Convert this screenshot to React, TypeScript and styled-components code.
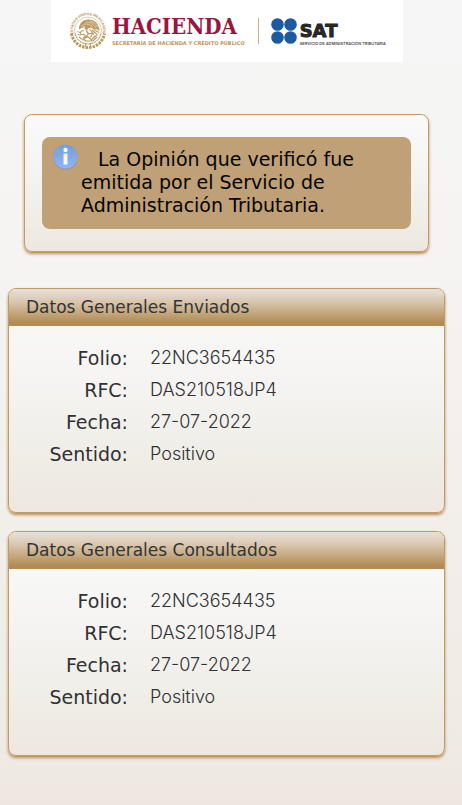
import React from "react";
import styled, { createGlobalStyle } from "styled-components";

const GlobalStyle = createGlobalStyle`
  *, *::before, *::after { box-sizing: border-box; }
  body {
    margin: 0;
    min-height: 100vh;
    background: linear-gradient(#f6f6f6 0%, #f5f4f2 32%, #f3efeb 60%, #efece5 90%, #eee7e0 100%);
    font-family: "DejaVu Sans", sans-serif;
  }
`;

const Page = styled.div`
  display: flex;
  flex-direction: column;
  padding-bottom: 49px;
`;

const Banner = styled.header`
  display: flex;
  align-items: center;
  align-self: center;
  width: calc(100% - 110px);
  max-width: 600px;
  height: 62px;
  padding-left: 18px;
  margin-right: 8px;
  background: #fff;
`;

const Emblem = styled.svg`
  flex: none;
  width: 38px;
  height: 38px;
`;

const Brand = styled.div<{ $gap: number }>`
  display: flex;
  flex-direction: column;
  margin-left: ${(p) => p.$gap}px;
  white-space: nowrap;
`;

const Ministry = styled.span`
  font: bold 22px/22px "DejaVu Serif Condensed", "DejaVu Serif", serif;
  color: #98163f;
`;

const MinistryName = styled.span`
  margin-top: 2px;
  font-size: 5px;
  line-height: 8px;
  font-weight: 700;
  color: #bd9660;
`;

const Divider = styled.span`
  flex: none;
  width: 1px;
  height: 26px;
  margin: 0 12px 0 13px;
  background: #cdae7d;
`;

const Dots = styled.svg`
  flex: none;
  width: 26px;
  height: 26px;
`;

const Agency = styled.span`
  padding-top: 5px;
  font: bold 18px/21px "DejaVu Sans", sans-serif;
  -webkit-text-stroke: 1px #282725;
  color: #282725;
`;

const AgencyName = styled.span`
  font-family: Inter, sans-serif;
  font-size: 4px;
  line-height: 6px;
  font-weight: 600;
  color: #4c4b49;
`;

const Main = styled.main`
  display: flex;
  flex-direction: column;
  gap: 18px;
  padding: 52px 17px 0 8px;
`;

const Card = styled.section`
  overflow: hidden;
  border: 1px solid #c29a68;
  border-radius: 8px;
  background: linear-gradient(#fafafa 0%, #f6f5f4 35%, #efece5 82%, #eee7e0 100%);
  box-shadow: 0 2px 3px #b98e55;
`;

const NoticeCard = styled(Card)`
  margin: 0 16px 18px;
  padding: 22px 17px;
`;

const Notice = styled.div`
  display: flex;
  gap: 3px;
  min-height: 92px;
  padding: 7px 11px 10px;
  border-radius: 8px;
  background: #bfa077;
`;

const InfoIcon = styled.svg`
  flex: none;
  width: 25px;
  height: 26px;
`;

const NoticeText = styled.p`
  margin: 4px 0 0;
  text-indent: 17px;
  font-size: 19px;
  line-height: 23px;
  color: #050403;
`;

const CardTitle = styled.h2`
  margin: 0;
  padding: 0 17px;
  font-size: 17px;
  line-height: 37px;
  font-weight: 400;
  color: #333436;
  background: linear-gradient(#e9e1d7 0%, #d8c6ae 35%, #b18b51 92%, #b38b5b 100%);
`;

const Fields = styled.dl`
  display: grid;
  grid-template-columns: 119px 1fr;
  grid-auto-rows: 32px;
  column-gap: 22px;
  align-items: center;
  margin: 0;
  padding: 16px 0 42px;
  line-height: 24px;
  color: #303133;
`;

const Label = styled.dt`
  text-align: right;
  font-size: 19px;
`;

const Value = styled.dd`
  margin: 0;
  font-family: Inter, sans-serif;
  font-size: 18px;
  font-weight: 300;
`;

const records: [string, string][] = [
  ["Folio:", "22NC3654435"],
  ["RFC:", "DAS210518JP4"],
  ["Fecha:", "27-07-2022"],
  ["Sentido:", "Positivo"],
];

function MexicanEmblem() {
  return (
    <Emblem viewBox="0 0 76 76" role="img" aria-label="Estados Unidos Mexicanos" fill="none" stroke="#bd9961">
      <defs>
        <path id="ring" d="M9 44A30 30 0 1 1 67 44" />
      </defs>
      <text fontSize="7" fontWeight="700" fontFamily="Inter, sans-serif" fill="#bd9961" stroke="none">
        <textPath href="#ring">ESTADOS UNIDOS MEXICANOS</textPath>
      </text>
      <circle cx="38" cy="37" r="27" strokeWidth="1" />
      <path d="M5 43C8 60 22 71 38 71S68 60 71 43" strokeWidth="6" strokeDasharray="5 2" />
      <path d="M12 44C16 57 26 64 38 64S60 57 64 44" strokeWidth="2" strokeDasharray="4 2" />
      <path d="M20 35C19 22 29 14 40 15C52 15 61 25 61 38C57 34 53 33 50 36C46 31 41 30 37 34C34 38 29 34 32 30C28 30 25 32 20 35Z" fill="#bd9961" stroke="none" />
      <path d="M29 25C35 22 43 26 48 30M34 20C43 19 50 26 54 32M25 27L31 29M42 18C50 20 55 25 58 31" stroke="#f6eddd" strokeWidth="1.2" />
      <path d="M36 34C33 42 40 45 46 42M41 34L50 45M46 36L56 45M51 36L60 41M30 37C22 37 20 46 27 45C34 44 34 51 28 51M39 43L33 51M47 43L43 51" strokeWidth="2.3" />
      <path d="M20 50C26 56 29 54 34 58H48L56 50M27 56L37 49L45 56L53 47" strokeWidth="2.4" />
      <path d="M17 39L24 42M17 44L23 47M58 45L51 51M33 62V69M43 62V69" strokeWidth="1.8" />
    </Emblem>
  );
}

function Record({ title }: { title: string }) {
  return (
    <Card>
      <CardTitle>{title}</CardTitle>
      <Fields>
        {records.map(([label, value]) => (
          <React.Fragment key={label}>
            <Label>{label}</Label>
            <Value>{value}</Value>
          </React.Fragment>
        ))}
      </Fields>
    </Card>
  );
}

export default function App() {
  return (
    <Page>
      <GlobalStyle />
      <Banner>
        <MexicanEmblem />
        <Brand $gap={5}>
          <Ministry>HACIENDA</Ministry>
          <MinistryName>SECRETARÍA DE HACIENDA Y CRÉDITO PÚBLICO</MinistryName>
        </Brand>
        <Divider />
        <Dots viewBox="0 0 26 26" fill="#1c5b9f" aria-hidden="true">
          <circle cx="6.5" cy="6.5" r="6.3" />
          <circle cx="19.5" cy="6.5" r="6.3" />
          <circle cx="6.5" cy="19.5" r="6.3" />
          <circle cx="19.5" cy="19.5" r="6.3" />
        </Dots>
        <Brand $gap={3}>
          <Agency>SAT</Agency>
          <AgencyName>SERVICIO DE ADMINISTRACIÓN TRIBUTARIA</AgencyName>
        </Brand>
      </Banner>
      <Main>
        <NoticeCard>
          <Notice>
            <InfoIcon viewBox="0 0 25 26" role="img" aria-label="Información">
              <defs>
                <linearGradient id="info" x1="0" y1="0" x2="0" y2="1">
                  <stop offset="0" stopColor="#719ed8" />
                  <stop offset="1" stopColor="#91b5f4" />
                </linearGradient>
              </defs>
              <circle cx="12.5" cy="13.5" r="12.3" fill="#8292ae" opacity="0.6" />
              <circle cx="12.5" cy="12.5" r="12" fill="url(#info)" />
              <circle cx="12.5" cy="6" r="2.2" fill="#f5f7fc" />
              <path d="M10.5 9.5H14.5V20.5H10.5Z" fill="#f5f7fc" />
            </InfoIcon>
            <NoticeText>
              La Opinión que verificó fue
              <br />
              emitida por el Servicio de
              <br />
              Administración Tributaria.
            </NoticeText>
          </Notice>
        </NoticeCard>
        <Record title="Datos Generales Enviados" />
        <Record title="Datos Generales Consultados" />
      </Main>
    </Page>
  );
}
